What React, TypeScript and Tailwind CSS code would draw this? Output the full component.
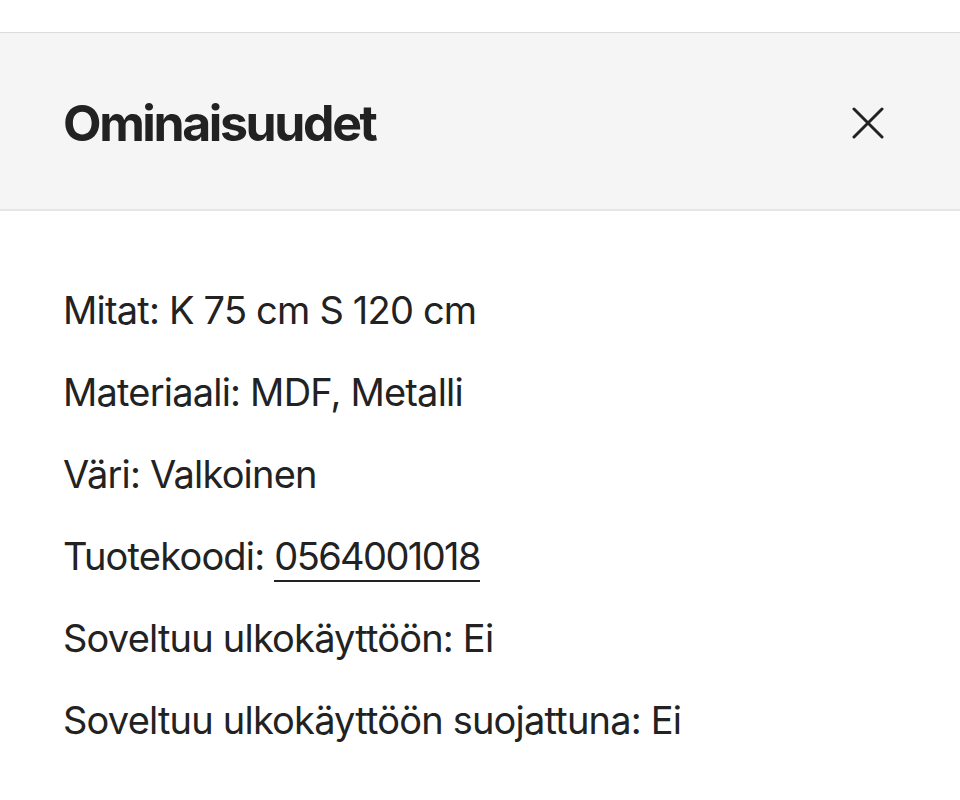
export default function App() {
  const rows = [
    { label: "Mitat:", value: "K 75 cm S 120 cm" },
    { label: "Materiaali:", value: "MDF, Metalli" },
    { label: "Väri:", value: "Valkoinen" },
    { label: "Tuotekoodi:", value: "0564001018", link: true },
    { label: "Soveltuu ulkokäyttöön:", value: "Ei" },
    { label: "Soveltuu ulkokäyttöön suojattuna:", value: "Ei" },
  ];

  return (
    <div className="min-h-[800px] bg-white text-[#222] font-['Inter',sans-serif]">
      <div className="h-[33px] border-b border-[#dcdcdc]" />
      <header className="flex h-[178px] items-center justify-between border-b-2 border-[#e6e6e6] bg-[#f5f5f5] pl-[63px] pr-[76px] pt-[4px]">
        <h2 className="text-[50px] font-bold tracking-[-2.4px]">Ominaisuudet</h2>
        <button className="flex h-[32px] w-[32px] items-center justify-center text-[#222]">
          <svg width="32" height="32" viewBox="0 0 32 32" fill="none" stroke="currentColor" strokeWidth="3" strokeLinecap="round">
            <path d="M2 2 L30 30 M30 2 L2 30" />
          </svg>
        </button>
      </header>
      <ul className="flex flex-col gap-[26px] px-[63px] pt-[71px]">
        {rows.map((r) => (
          <li key={r.label} className="text-[38px] leading-[56px] tracking-[-0.8px]">
            {r.label}{" "}
            {r.link ? (
              <span className="border-b-2 border-[#222] pb-[1px] tracking-[-1.6px]">{r.value}</span>
            ) : (
              r.value
            )}
          </li>
        ))}
      </ul>
    </div>
  );
}
